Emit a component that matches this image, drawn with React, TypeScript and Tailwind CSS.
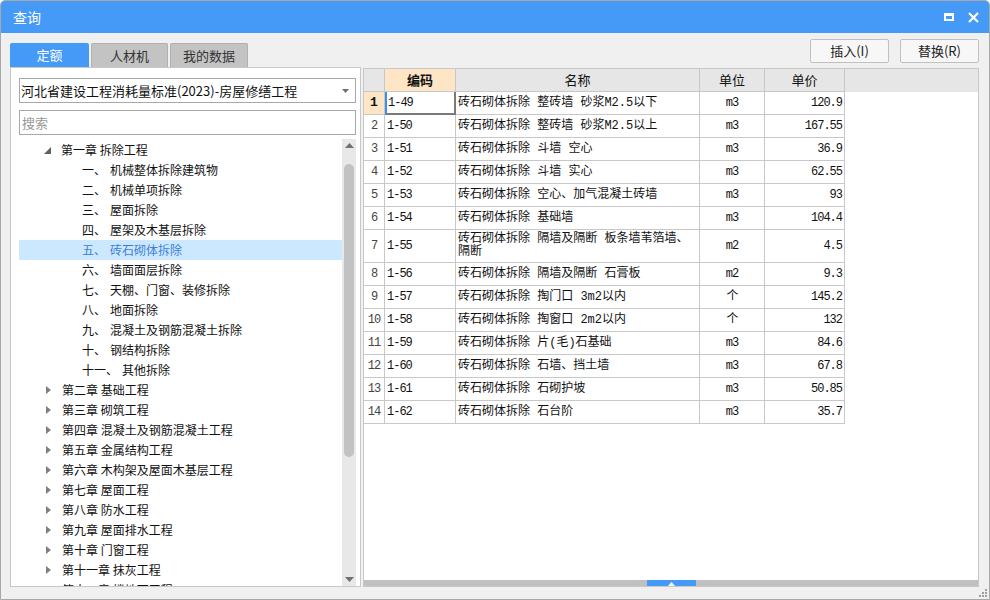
const cjk = { fontFamily: '"Noto Sans CJK SC", "Noto Sans", sans-serif' };
const mono = { fontFamily: '"Liberation Mono", "Noto Sans CJK SC", monospace' };

const subItems = [
  ["一、", "机械整体拆除建筑物"],
  ["二、", "机械单项拆除"],
  ["三、", "屋面拆除"],
  ["四、", "屋架及木基层拆除"],
  ["五、", "砖石砌体拆除"],
  ["六、", "墙面面层拆除"],
  ["七、", "天棚、门窗、装修拆除"],
  ["八、", "地面拆除"],
  ["九、", "混凝土及钢筋混凝土拆除"],
  ["十、", "钢结构拆除"],
  ["十一、", "其他拆除"],
];

const chapters = [
  "第二章 基础工程",
  "第三章 砌筑工程",
  "第四章 混凝土及钢筋混凝土工程",
  "第五章 金属结构工程",
  "第六章 木构架及屋面木基层工程",
  "第七章 屋面工程",
  "第八章 防水工程",
  "第九章 屋面排水工程",
  "第十章 门窗工程",
  "第十一章 抹灰工程",
  "第十二章 楼地面工程",
];

const rows: [string, string[], string, string][] = [
  ["1-49", ["砖石砌体拆除 整砖墙 砂浆M2.5以下"], "m3", "120.9"],
  ["1-50", ["砖石砌体拆除 整砖墙 砂浆M2.5以上"], "m3", "167.55"],
  ["1-51", ["砖石砌体拆除 斗墙 空心"], "m3", "36.9"],
  ["1-52", ["砖石砌体拆除 斗墙 实心"], "m3", "62.55"],
  ["1-53", ["砖石砌体拆除 空心、加气混凝土砖墙"], "m3", "93"],
  ["1-54", ["砖石砌体拆除 基础墙"], "m3", "104.4"],
  ["1-55", ["砖石砌体拆除 隔墙及隔断 板条墙苇箔墙、", "隔断"], "m2", "4.5"],
  ["1-56", ["砖石砌体拆除 隔墙及隔断 石膏板"], "m2", "9.3"],
  ["1-57", ["砖石砌体拆除 掏门口 3m2以内"], "个", "145.2"],
  ["1-58", ["砖石砌体拆除 掏窗口 2m2以内"], "个", "132"],
  ["1-59", ["砖石砌体拆除 片(毛)石基础"], "m3", "84.6"],
  ["1-60", ["砖石砌体拆除 石墙、挡土墙"], "m3", "67.8"],
  ["1-61", ["砖石砌体拆除 石砌护坡"], "m3", "50.85"],
  ["1-62", ["砖石砌体拆除 石台阶"], "m3", "35.7"],
];

const cols = "grid grid-cols-[21px_71px_244px_65px_80px]";

export default function App() {
  return (
    <div
      className="w-[990px] h-[600px] flex flex-col border border-[#a8a8a8] rounded-t-[5px] overflow-hidden bg-[#f0f0f0]"
      style={cjk}
    >
      {/* Title bar */}
      <div className="h-[32px] shrink-0 bg-[#4599f7] flex items-center justify-between pl-[12px] pr-[10px] text-white">
        <span className="text-[14px]">查询</span>
        <div className="flex items-center gap-[14px]">
          <div className="w-[10px] h-[8px] border-2 border-t-[3px] border-white" />
          <svg width="11" height="11" viewBox="0 0 11 11">
            <path d="M1 1 L10 10 M10 1 L1 10" stroke="white" strokeWidth="2.2" />
          </svg>
        </div>
      </div>

      {/* Body */}
      <div className="flex-1 min-h-0 flex pl-[9px] pr-[10px] pb-[12px] gap-[2px] text-[12px] text-[#111]">
        {/* Left column */}
        <div className="w-[351px] flex flex-col pt-[10px] min-h-0">
          <div className="flex h-[24px] shrink-0 gap-[2px]">
            <div className="w-[79px] bg-[#4599f7] text-white rounded-t-[2px] flex items-center justify-center text-[13px]">
              定额
            </div>
            <div className="w-[77px] bg-[#c3c3c3] border border-b-0 border-[#b0b0b0] rounded-t-[2px] flex items-center justify-center text-[13px] text-[#333]">
              人材机
            </div>
            <div className="w-[78px] bg-[#c3c3c3] border border-b-0 border-[#b0b0b0] rounded-t-[2px] flex items-center justify-center text-[13px] text-[#333]">
              我的数据
            </div>
          </div>
          <div className="flex-1 bg-white border border-[#c8c8c8] flex flex-col pl-[8px] pr-[4px] pt-[10px] min-h-0">
            <div className="h-[25px] shrink-0 border border-[#a8a8a8] flex items-center justify-between pl-[1px] pr-[6px] text-[13px]">
              <span>河北省建设工程消耗量标准(2023)-房屋修缮工程</span>
              <svg width="7" height="4" viewBox="0 0 7 4">
                <path d="M0 0 H7 L3.5 4 Z" fill="#707070" />
              </svg>
            </div>
            <div className="h-[25px] shrink-0 mt-[7px] border border-[#a8a8a8] flex items-center pl-[2px] text-[13px] text-[#999]">
              搜索
            </div>
            <div className="flex-1 flex mt-[4px] min-h-0 overflow-hidden">
              <div className="flex-1 flex flex-col pt-[1px] overflow-hidden">
                <div className="h-[20px] flex items-center shrink-0">
                  <svg width="7" height="7" viewBox="0 0 7 7" className="ml-[25px] mr-[10px]">
                    <path d="M7 0 V7 H0 Z" fill="#606060" />
                  </svg>
                  <span>第一章 拆除工程</span>
                </div>
                {subItems.map(([n, t], i) => (
                  <div
                    key={t}
                    className={
                      i === 4
                        ? "h-[20px] flex items-center shrink-0 bg-[#cce8ff] text-[#3c7fd9] whitespace-nowrap"
                        : "h-[20px] flex items-center shrink-0 whitespace-nowrap"
                    }
                  >
                    <span className="ml-[63px] min-w-[28px] pr-[4px]">{n}</span>
                    <span>{t}</span>
                  </div>
                ))}
                {chapters.map((c) => (
                  <div key={c} className="h-[20px] flex items-center shrink-0 whitespace-nowrap">
                    <svg width="5" height="8" viewBox="0 0 5 8" className="ml-[27px] mr-[11px]">
                      <path d="M0 0 L5 4 L0 8 Z" fill="#808080" />
                    </svg>
                    <span>{c}</span>
                  </div>
                ))}
              </div>
              {/* Vertical scrollbar */}
              <div className="w-[14px] shrink-0 bg-[#e8e8e8] flex flex-col items-center">
                <svg width="9" height="5" viewBox="0 0 9 5" className="mt-[4px]">
                  <path d="M0 5 L4.5 0 L9 5 Z" fill="#707070" />
                </svg>
                <div className="mt-[16px] w-[10px] h-[293px] bg-[#c2c2c2] rounded-[5px]" />
                <div className="flex-1" />
                <svg width="9" height="5" viewBox="0 0 9 5" className="mb-[4px]">
                  <path d="M0 0 L9 0 L4.5 5 Z" fill="#707070" />
                </svg>
              </div>
            </div>
          </div>
        </div>

        {/* Right column */}
        <div className="flex-1 flex flex-col pt-[6px] min-h-0">
          <div className="flex justify-end gap-[11px] h-[24px] shrink-0">
            <button className="w-[79px] h-[24px] bg-[#f7f7f7] border border-[#c0c0c0] rounded-[2px] text-[13px] text-[#222]">
              插入(I)
            </button>
            <button className="w-[79px] h-[24px] bg-[#f7f7f7] border border-[#c0c0c0] rounded-[2px] text-[13px] text-[#222]">
              替换(R)
            </button>
          </div>
          <div className="flex-1 min-h-0 mt-[5px] bg-white border border-[#c8c8c8] flex flex-col">
            <div className="flex-1">
              <div className={`${cols} h-[23px] bg-[#e6e6e6] text-[13px]`}>
                <div className="border-r border-b border-[#c8c8c8]" />
                <div className="border-r border-b border-[#c8c8c8] bg-[#fde5c6] font-bold flex items-center justify-center">
                  编码
                </div>
                <div className="border-r border-b border-[#c8c8c8] flex items-center justify-center">名称</div>
                <div className="border-r border-b border-[#c8c8c8] flex items-center justify-center">单位</div>
                <div className="border-r border-b border-[#c8c8c8] flex items-center justify-center">单价</div>
              </div>
              {rows.map(([code, name, unit, price], i) => (
                <div
                  key={code}
                  className={`${cols} ${name.length > 1 ? "h-[33px]" : "h-[23px]"} text-[12px]`}
                >
                  <div
                    className={
                      i === 0
                        ? "border-r border-b border-[#c8c8c8] bg-[#fde5c6] font-bold flex items-center justify-center text-[13px]"
                        : "border-r border-b border-[#c8c8c8] flex items-center justify-center text-[#444] tracking-[-1px]"
                    }
                    style={mono}
                  >
                    {i + 1}
                  </div>
                  <div
                    className={
                      i === 0
                        ? "border-l-[2px] border-l-[#3b8ff0] border-r-[2px] border-b-[2px] border-[#7a7a7a] flex items-center pl-[1px] tracking-[-1px]"
                        : "border-r border-b border-[#c8c8c8] flex items-center pl-[2px] tracking-[-1px]"
                    }
                    style={mono}
                  >
                    {code}
                  </div>
                  <div
                    className="border-r border-b border-[#c8c8c8] flex flex-col justify-center pl-[2px] leading-[13px] whitespace-pre"
                    style={mono}
                  >
                    {name.map((l) => (
                      <span key={l}>{l}</span>
                    ))}
                  </div>
                  <div
                    className="border-r border-b border-[#c8c8c8] flex items-center justify-center tracking-[-1px]"
                    style={mono}
                  >
                    {unit}
                  </div>
                  <div
                    className="border-r border-b border-[#c8c8c8] flex items-center justify-end pr-[2px] tracking-[-1px]"
                    style={mono}
                  >
                    {price}
                  </div>
                </div>
              ))}
            </div>
            {/* Horizontal scrollbar */}
            <div className="h-[6px] shrink-0 bg-[#c0c0c0] flex">
              <div className="ml-[283px] w-[49px] bg-[#4599f7] flex items-end justify-center">
                <svg width="7" height="4" viewBox="0 0 7 4">
                  <path d="M0 4 L3.5 0 L7 4 Z" fill="white" />
                </svg>
              </div>
            </div>
          </div>
          <div className="h-[12px] -mb-[12px] shrink-0 flex justify-end items-end pb-[1px]">
            <svg width="9" height="9" viewBox="0 0 9 9" className="-mr-[9px]">
              <rect x="6" y="0" width="2" height="2" fill="#a0a0a0" />
              <rect x="3" y="3" width="2" height="2" fill="#a0a0a0" />
              <rect x="6" y="3" width="2" height="2" fill="#a0a0a0" />
              <rect x="0" y="6" width="2" height="2" fill="#a0a0a0" />
              <rect x="3" y="6" width="2" height="2" fill="#a0a0a0" />
              <rect x="6" y="6" width="2" height="2" fill="#a0a0a0" />
            </svg>
          </div>
        </div>
      </div>
    </div>
  );
}
